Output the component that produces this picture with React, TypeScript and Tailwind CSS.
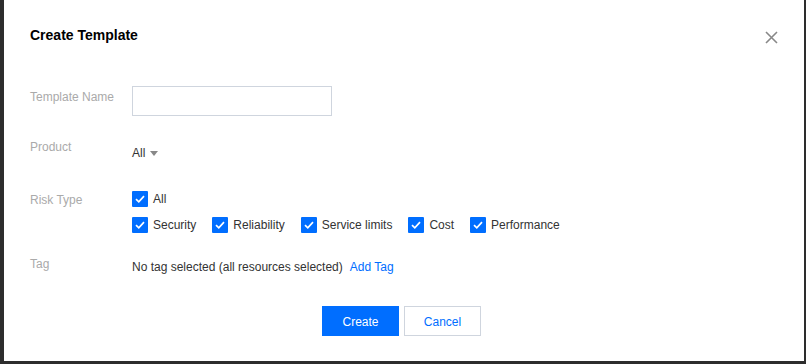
import React from "react";

function Check({ label }: { label: string }) {
  return (
    <div className="flex items-center">
      <span className="flex h-4 w-4 items-center justify-center rounded-[1px] bg-[#006eff]">
        <svg width="10" height="8" viewBox="0 0 10 8" fill="none">
          <path d="M1 4.2 L3.8 6.8 L9 1.2" stroke="white" strokeWidth="1.7" />
        </svg>
      </span>
      <span className="ml-[5px] text-[12px] leading-[20px] text-[#333]">{label}</span>
    </div>
  );
}

export default function App() {
  return (
    <div
      className="h-[364px] w-[806px] border-l-4 border-r-2 border-b-[3px] border-[#2d2d2d] bg-white"
      style={{ fontFamily: '"Segoe UI", "Liberation Sans", Arial, sans-serif' }}
    >
      <div className="flex items-center justify-between pl-[26px] pr-[26px] pt-[25px]">
        <h1 className="text-[14px] font-bold leading-[20px] text-[#000]">Create Template</h1>
        <svg width="13" height="13" viewBox="0 0 13 13" className="mt-[4px]">
          <path d="M1 1 L12 12 M12 1 L1 12" stroke="#888" strokeWidth="1.6" />
        </svg>
      </div>

      <div className="pl-[26px] pt-[41px]">
        <div className="flex items-start">
          <div className="w-[102px] pt-[1px] text-[12px] leading-[20px] text-[#aaa]">Template Name</div>
          <div className="h-[30px] w-[200px] border border-[#cfd5de]" />
        </div>

        <div className="mt-[21px] flex items-start">
          <div className="w-[102px] text-[12px] leading-[20px] text-[#aaa]">Product</div>
          <div className="mt-[6px] flex items-center text-[12px] leading-[20px] text-[#333]">
            All
            <svg width="8" height="5" viewBox="0 0 8 5" className="ml-[5px]">
              <path d="M0 0 L8 0 L4 5 Z" fill="#888" />
            </svg>
          </div>
        </div>

        <div className="mt-[26px] flex items-start">
          <div className="w-[102px] pt-[1px] text-[12px] leading-[20px] text-[#aaa]">Risk Type</div>
          <div className="flex flex-col gap-[6px]">
            <Check label="All" />
            <div className="flex gap-[16px]">
              <Check label="Security" />
              <Check label="Reliability" />
              <Check label="Service limits" />
              <Check label="Cost" />
              <Check label="Performance" />
            </div>
          </div>
        </div>

        <div className="mt-[19px] flex items-start">
          <div className="w-[102px] text-[12px] leading-[20px] text-[#aaa]">Tag</div>
          <div className="mt-[3px] flex text-[12px] leading-[20px] text-[#333]">
            No tag selected (all resources selected)
            <span className="ml-[7px] text-[#006eff]">Add Tag</span>
          </div>
        </div>
      </div>

      <div className="mt-[29px] flex justify-center gap-[5px] pr-[5px]">
        <button className="h-[30px] w-[77px] bg-[#006eff] pt-[1px] text-[12px] text-white">Create</button>
        <button className="h-[30px] w-[77px] border border-[#cfd5de] bg-white pt-[1px] text-[12px] text-[#006eff]">Cancel</button>
      </div>
    </div>
  );
}
